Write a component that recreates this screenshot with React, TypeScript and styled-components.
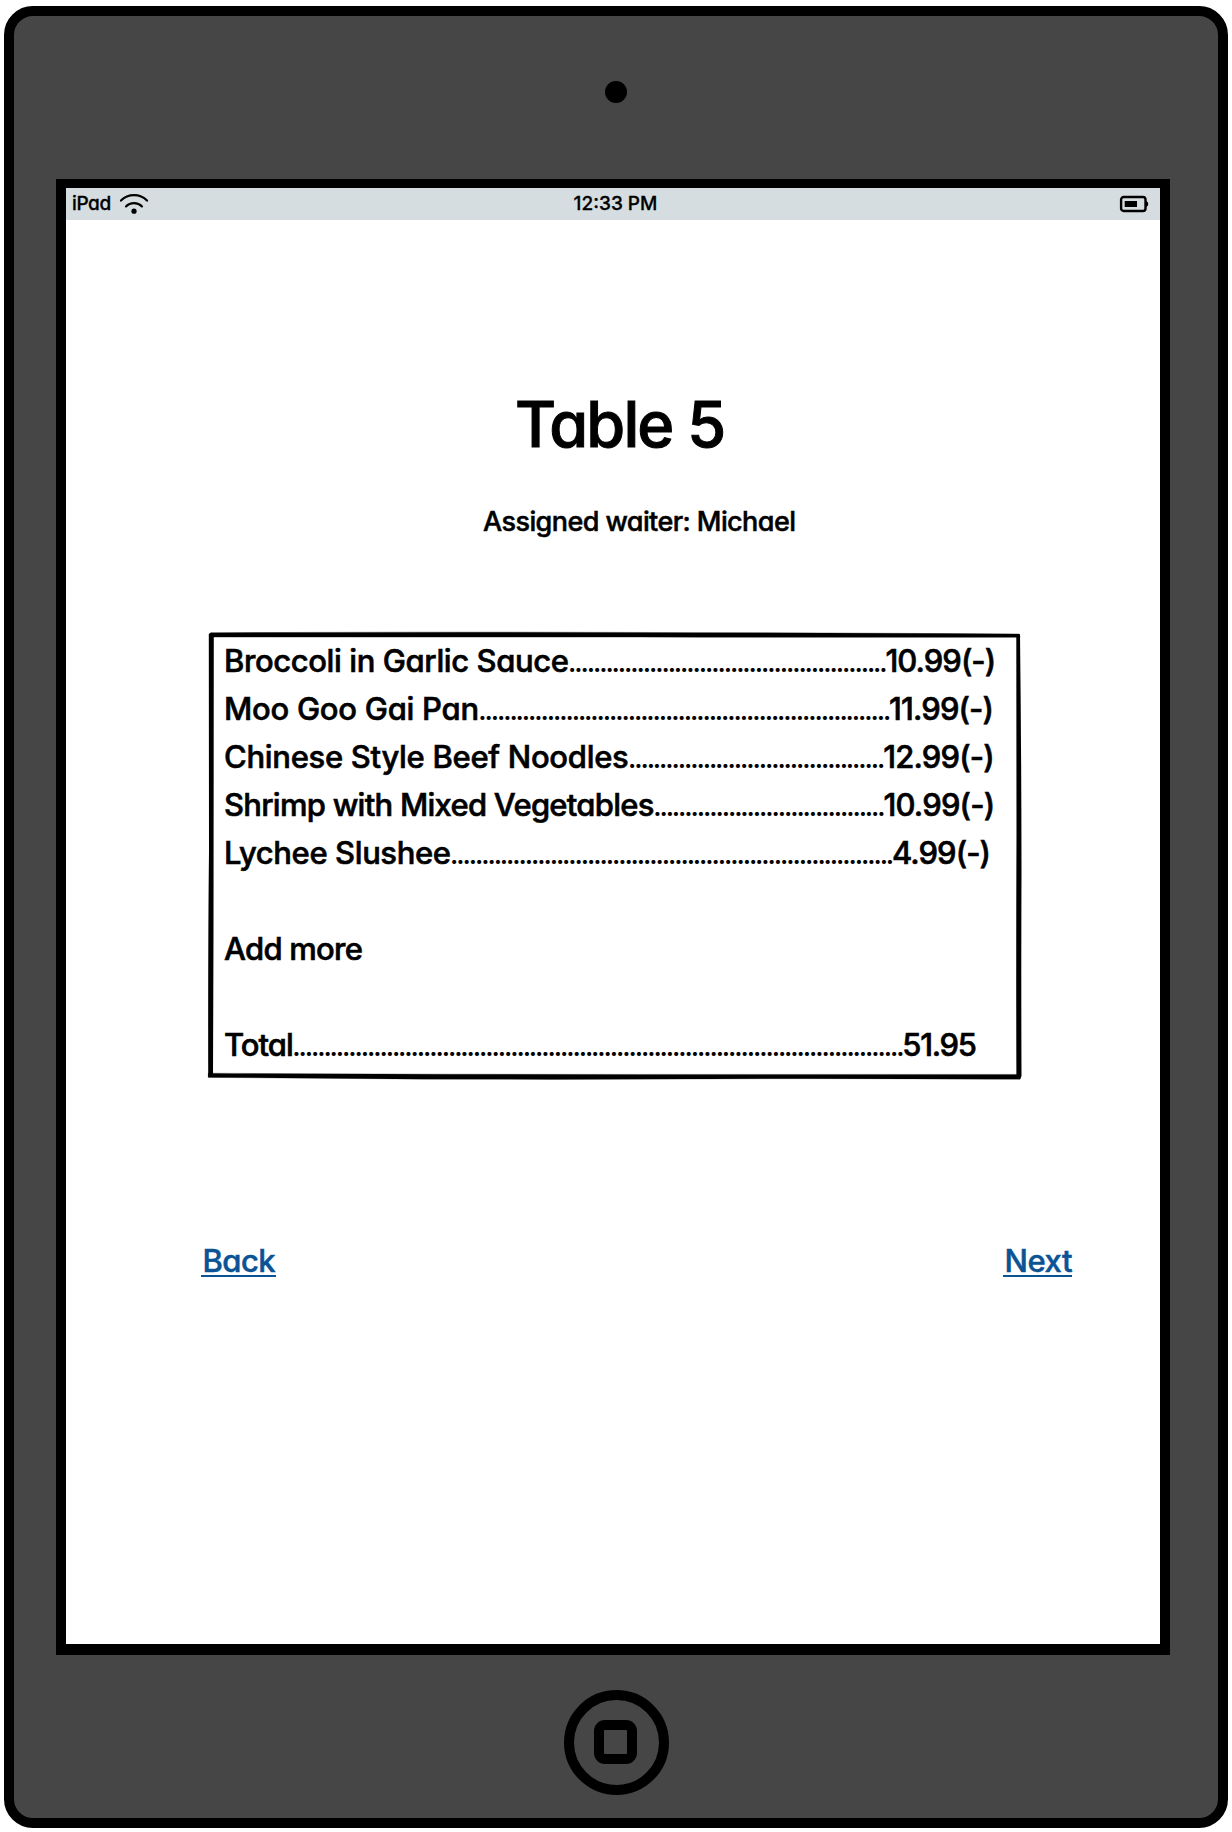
import React from 'react';
import styled, { createGlobalStyle } from 'styled-components';

const GlobalStyle = createGlobalStyle`
  * { box-sizing: border-box; }
  body {
    margin: 0;
    background: #fff;
    color: #000;
    font-family: Inter, "Liberation Sans", sans-serif;
    font-weight: 500;
    font-feature-settings: 'cv11' 1;
  }
`;

const Page = styled.div`
  width: 1232px;
  height: 1832px;
  padding: 6px 4px 4px;
`;

const Tablet = styled.main`
  display: flex;
  flex-direction: column;
  align-items: center;
  width: 1224px;
  height: 1822px;
  border: 10px solid #000;
  border-radius: 29px;
  background: #464646;
`;

const Camera = styled.div`
  width: 22px;
  height: 22px;
  margin-top: 65px;
  border-radius: 50%;
  background: #000;
`;

const Screen = styled.section`
  display: flex;
  flex-direction: column;
  width: 1114px;
  height: 1476px;
  margin: 76px 6px 0 0;
  border: solid #000;
  border-width: 9px 10px 11px;
  background: #fff;
`;

const HomeButton = styled.div`
  display: grid;
  place-items: center;
  width: 105px;
  height: 105px;
  margin: 34.5px 0 0 0;
  border: 10px solid #000;
  border-radius: 50%;
`;

const HomeGlyph = styled.div`
  width: 43px;
  height: 44px;
  margin-right: 1px;
  border: 10px solid #000;
  border-radius: 11px;
`;

const StatusBar = styled.header`
  display: grid;
  grid-template-columns: 1fr auto 1fr;
  height: 32px;
  background: #d6dde0;
  font-size: 19px;
  line-height: 31px;
  -webkit-text-stroke: 0.3px #000;
`;

const Carrier = styled.div`
  display: flex;
  gap: 8px;
  padding-left: 6px;
  letter-spacing: -0.4px;
`;

const Clock = styled.div`
  padding-left: 5px;
`;

const BatterySlot = styled.div`
  display: flex;
  justify-content: flex-end;
  padding: 7px 11px 0 0;
`;

const WifiIcon = styled.svg`
  width: 30px;
  height: 22px;
  margin-top: 5px;
`;

const BatteryIcon = styled.svg`
  width: 30px;
  height: 18px;
`;

const Title = styled.h1`
  margin: 172px 0 0 449px;
  font-size: 63px;
  font-weight: 500;
  line-height: 64px;
  letter-spacing: -1.9px;
  -webkit-text-stroke: 1px #000;
`;

const Waiter = styled.p`
  margin: 50px 0 0 417px;
  font-size: 27px;
  line-height: 32px;
  letter-spacing: -0.58px;
  -webkit-text-stroke: 0.5px #000;
`;

const Order = styled.div`
  position: relative;
  width: 813px;
  height: 448px;
  margin: 94px 0 0 142px;
  padding: 5px 0 0 16px;
`;

const SketchBorder = styled.svg`
  position: absolute;
  inset: 0;
  width: 813px;
  height: 448px;
  overflow: visible;
`;

const Line = styled.div`
  height: 48px;
  font-size: 31px;
  line-height: 48px;
  white-space: nowrap;
  -webkit-text-stroke: 0.6px #000;
`;

const Tracked = styled.span<{ $track: number }>`
  letter-spacing: ${p => p.$track}px;
`;

const Leader = styled.span`
  margin-right: -0.6px;
  font-family: Lato, sans-serif;
  line-height: 1;
  letter-spacing: -1.09px;
  -webkit-text-stroke: 0;
`;

const Nav = styled.nav`
  display: flex;
  justify-content: space-between;
  margin: 164px 88px 0 135px;
`;

const NavLink = styled.a<{ $width: number; $track: number }>`
  width: ${p => p.$width}px;
  height: 33px;
  padding-left: 1.4px;
  border-bottom: 2px solid #0a5394;
  color: #0a5394;
  font-size: 31px;
  line-height: 33px;
  letter-spacing: ${p => p.$track}px;
  -webkit-text-stroke: 0.5px #0a5394;
`;

type Entry = { name: string; track: number; dots?: number; price?: string; priceTrack?: number };

const entries: Entry[] = [
  { name: 'Broccoli in Garlic Sauce', track: -0.4, dots: 51, price: '10.99(-)', priceTrack: -0.96 },
  { name: 'Moo Goo Gai Pan', track: -0.27, dots: 66, price: '11.99(-)', priceTrack: -0.9 },
  { name: 'Chinese Style Beef Noodles', track: -0.3, dots: 41, price: '12.99(-)', priceTrack: -0.82 },
  { name: 'Shrimp with Mixed Vegetables', track: -0.74, dots: 37, price: '10.99(-)', priceTrack: -0.82 },
  { name: 'Lychee Slushee', track: -0.4, dots: 71, price: '4.99(-)', priceTrack: -0.95 },
  { name: '', track: 0 },
  { name: 'Add more', track: -0.75 },
  { name: '', track: 0 },
  { name: 'Total', track: -1, dots: 98, price: '51.95', priceTrack: -1.3 },
];

export default function App() {
  return (
    <Page>
      <GlobalStyle />
      <Tablet>
        <Camera />
        <Screen>
          <StatusBar>
            <Carrier>
              iPad
              <WifiIcon viewBox="0 0 30 22" fill="none" stroke="#000" strokeWidth="2.2" strokeLinecap="round">
                <path d="M2 7.6C9 .4 21 .4 28 7.6" />
                <path d="M7 13.4C11.2 9 18.8 9 23 13.4" />
                <circle cx="15" cy="18.2" r="2.6" fill="#000" stroke="none" />
              </WifiIcon>
            </Carrier>
            <Clock>12:33 PM</Clock>
            <BatterySlot>
              <BatteryIcon viewBox="0 0 30 18">
                <rect x="2.1" y="2" width="24.4" height="14" rx="2.6" fill="none" stroke="#000" strokeWidth="2.4" />
                <rect x="5.7" y="6" width="12.3" height="6" fill="#000" />
                <path d="M26.5 6Q29.2 6.3 29.2 9T26.5 12Z" fill="#000" />
              </BatteryIcon>
            </BatterySlot>
          </StatusBar>
          <Title>Table 5</Title>
          <Waiter>Assigned waiter: Michael</Waiter>
          <Order>
            <SketchBorder viewBox="0 0 813 448">
              <path
                d="M3 .8Q200 -.2 412 .4Q600 .8 811 2L812 5.3Q600 5.4 430 5L2 5Z"
                stroke="#000"
                strokeWidth=".4"
                strokeLinejoin="round"
              />
              <path d="M.8 2L3 .6L5.8 3Q5.6 220 5.5 300L5 445L.2 445Q0 300 1 220Z" />
              <path d="M808.3 3L812 2Q813.4 120 813.5 240Q813.1 350 813.5 444L812.2 447.2L808.4 445Q808 330 808.5 200Z" />
              <path
                d="M.3 441.2Q200 442.4 430 442.4L812 442.4L812 447.2Q600 446.2 480 447Q300 448 130 446.4L.3 445.4Z"
                stroke="#000"
                strokeWidth=".3"
                strokeLinejoin="round"
              />
            </SketchBorder>
            {entries.map((e, i) => (
              <Line key={i}>
                <Tracked $track={e.track}>{e.name}</Tracked>
                {e.dots && <Leader>{'.'.repeat(e.dots)}</Leader>}
                {e.price && <Tracked $track={e.priceTrack ?? 0}>{e.price}</Tracked>}
              </Line>
            ))}
          </Order>
          <Nav>
            <NavLink $width={75} $track={-0.5}>Back</NavLink>
            <NavLink $width={69} $track={-0.4}>Next</NavLink>
          </Nav>
        </Screen>
        <HomeButton>
          <HomeGlyph />
        </HomeButton>
      </Tablet>
    </Page>
  );
}
